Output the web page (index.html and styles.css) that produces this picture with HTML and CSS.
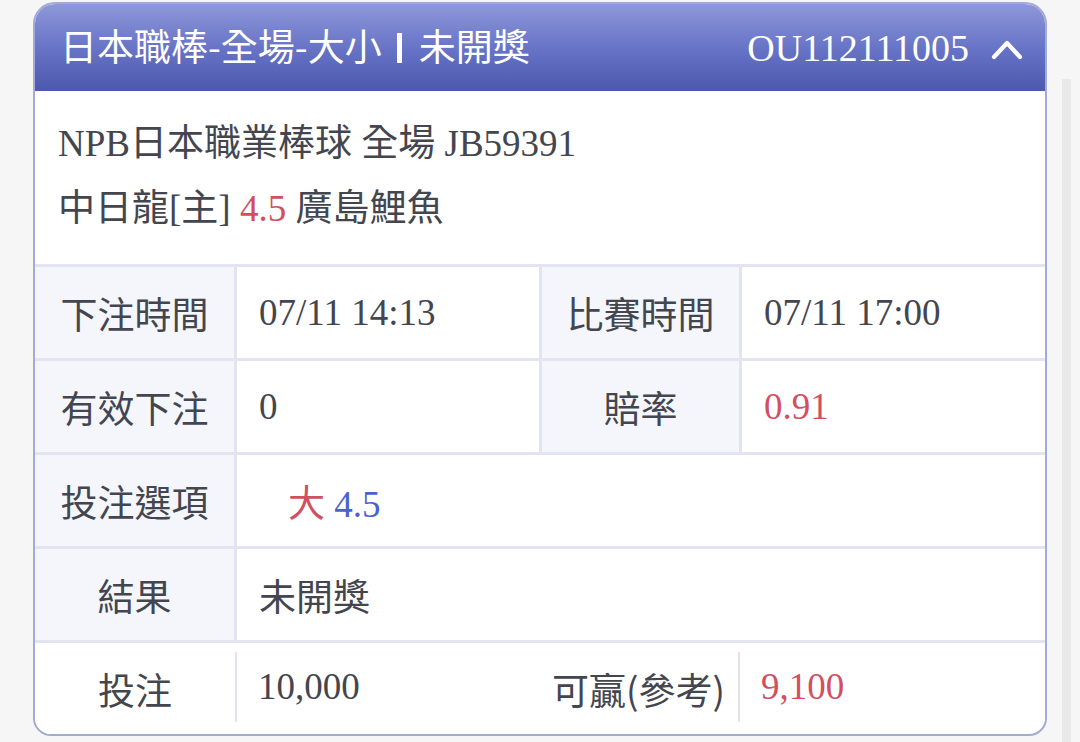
FILE: index.html
```html
<!DOCTYPE html>
<html lang="zh-Hant">
<head>
    <meta charset="UTF-8">
    <meta name="viewport" content="width=device-width, initial-scale=1.0">
    <title>注單明細</title>
    <link rel="stylesheet" href="styles.css">
</head>
<body>

    <div class="page">
        <div class="card">
            <div class="card-head">
                <div class="head-title">日本職棒-全場-大小<span class="head-bar"></span>未開獎</div>
                <div class="head-right">
                    <span class="head-no">OU112111005</span>
                    <svg class="chevron" width="32" height="22" viewBox="0 0 32 22">
                        <polyline points="3,19 16,5 29,19" fill="none" stroke="#fff" stroke-width="4.2" stroke-linecap="round" stroke-linejoin="round"/>
                    </svg>
                </div>
            </div>

            <div class="match">
                <p>NPB日本職業棒球 全場 JB59391</p>
                <p>中日龍[主] <span class="red">4.5</span> 廣島鯉魚</p>
            </div>

            <div class="grid">
                <div class="label">下注時間</div>
                <div class="value">07/11 14:13</div>
                <div class="label">比賽時間</div>
                <div class="value">07/11 17:00</div>

                <div class="label">有效下注</div>
                <div class="value">0</div>
                <div class="label">賠率</div>
                <div class="value red">0.91</div>

                <div class="label">投注選項</div>
                <div class="value wide"><span class="pick"><span class="red">大</span> <span class="blue">4.5</span></span></div>

                <div class="label">結果</div>
                <div class="value wide">未開獎</div>
            </div>

            <div class="foot">
                <div class="label">投注</div>
                <div class="value">10,000</div>
                <div class="label">可贏(參考)</div>
                <div class="value red">9,100</div>
            </div>
        </div>
        <div class="track"></div>
    </div>

</body>
</html>
```

FILE: styles.css
```css
body {
    margin: 0;
    background-color: #f6f6f7;
    color: #43464f;
    font-family: "Liberation Serif", "Noto Sans CJK TC", serif;
    font-size: 37px;
}
.page {
    display: flex;
    align-items: flex-start;
    padding: 2px 0 0 33px;
}
.card {
    width: 1014px;
    box-sizing: border-box;
    background-color: #fff;
    border: 2px solid #a3aad3;
    border-radius: 22px 22px 18px 18px;
    overflow: hidden;
}
.track {
    width: 9px;
    height: 680px;
    margin: 77px 0 0 15px;
    background-color: #e9e9ea;
}
.card-head {
    height: 87px;
    display: flex;
    align-items: center;
    justify-content: space-between;
    padding: 0 22px 0 25px;
    background: linear-gradient(180deg, #8e98da 0%, #6874c6 50%, #4b58ad 100%);
    color: #fff;
}
.head-title {
    display: flex;
    align-items: center;
    font-family: "Noto Sans CJK TC", sans-serif;
    font-size: 37px;
    line-height: 1;
    padding-bottom: 4px;
}
.head-bar {
    display: inline-block;
    width: 5px;
    height: 30px;
    margin: 4px 17px 0 15px;
    background-color: #fff;
}
.head-right {
    display: flex;
    align-items: center;
    gap: 22px;
}
.head-no {
    font-family: "Liberation Serif", serif;
    font-size: 38px;
    line-height: 1;
}
.chevron {
    display: block;
    margin-top: 2px;
}
.match {
    padding: 20px 23px 23px;
}
.match p {
    margin: 0;
    line-height: 65px;
}
.red {
    color: #d34f5f;
}
.blue {
    color: #4b61d0;
}
.grid {
    display: grid;
    grid-template-columns: 199px 302px 197px 1fr;
    gap: 3px;
    background-color: #e2e4f1;
    border-top: 3px solid #e2e4f1;
    border-bottom: 3px solid #e2e4f1;
}
.grid .label,
.grid .value {
    height: 91px;
    display: flex;
    align-items: center;
}
.label {
    justify-content: center;
    font-family: "Noto Sans CJK TC", sans-serif;
    background-color: #f5f6fb;
}
.value {
    padding-left: 22px;
    background-color: #fff;
}
.wide {
    grid-column: span 3;
}
.pick {
    padding-left: 29px;
}
.foot {
    display: grid;
    grid-template-columns: 200px 304px 199px 1fr;
    height: 91px;
    align-items: center;
}
.foot .label {
    background-color: #fff;
    height: 100%;
    display: flex;
    align-items: center;
}
.foot .value {
    border-left: 2px solid #e3e4ea;
    height: 70px;
    display: flex;
    align-items: center;
    padding-left: 21px;
    margin-top: -4px;
}
```
